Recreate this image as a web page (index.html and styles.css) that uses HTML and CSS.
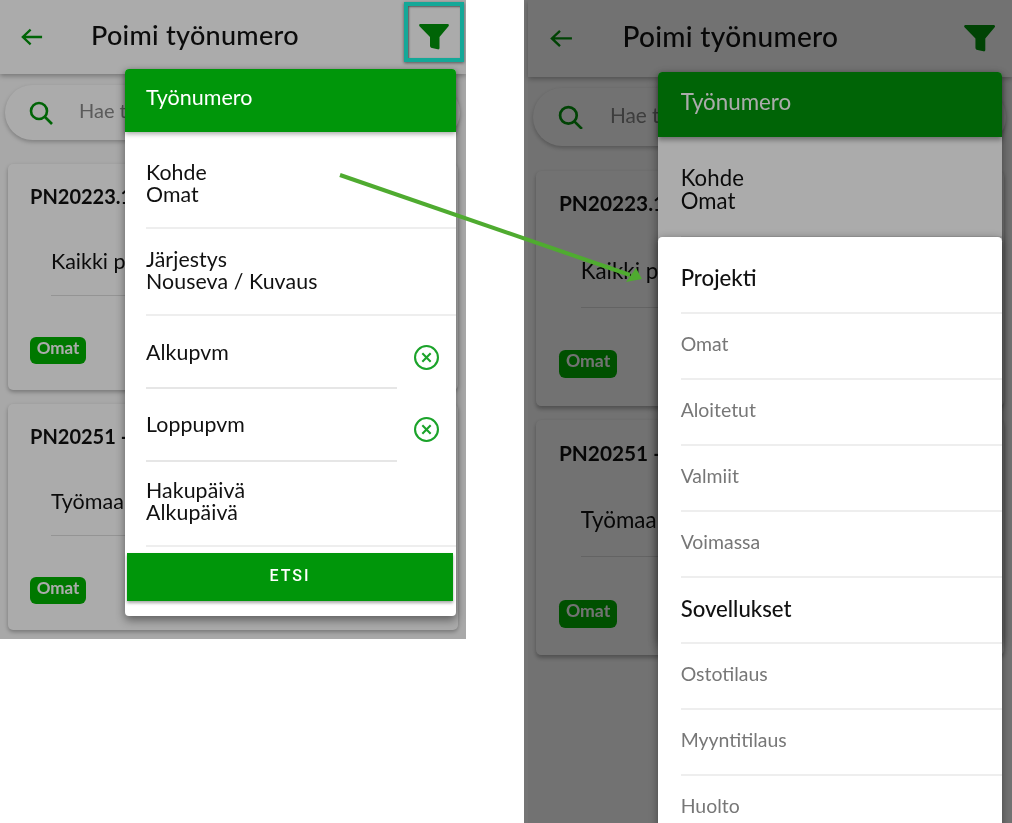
FILE: index.html
```html
<!DOCTYPE html>
<html lang="fi">
<head>
    <meta charset="UTF-8">
    <meta content="width=device-width, initial-scale=1.0" name="viewport">
    <title>Poimi työnumero</title>
    <link rel="stylesheet" href="styles.css">
</head>
<body>

<div class="shot shot-left">
    <div class="screen">
        <header class="appbar">
            <svg class="icon-back" viewBox="0 0 24 20"><path d="M23 10H2M10.500 2 2 10l8.500 8"/></svg>
            <h1 class="appbar-title">Poimi työnumero</h1>
            <svg class="icon-filter" viewBox="0 0 30 26"><path d="M1.500 0h27c1.200 0 1.800 1.200 1 2.200L20.500 13v11c0 1-.8 1.600-1.800 1.300l-5.700-1.300c-1.200-.3-2-1-2-2.200V13L.5 2.200C-.3 1.200.3 0 1.500 0z"/></svg>
        </header>
        <div class="search">
            <svg class="icon-search" viewBox="0 0 24 24"><circle cx="10" cy="10" r="8"/><path d="m16 16 7 7"/></svg>
            <span class="search-text">Hae t</span>
        </div>
        <div class="card">
            <div class="card-title">PN20223.1</div>
            <div class="card-sub">Kaikki p</div>
            <span class="badge">Omat</span>
        </div>
        <div class="card">
            <div class="card-title">PN20251 -</div>
            <div class="card-sub">Työmaa</div>
            <span class="badge">Omat</span>
        </div>
        <div class="scrim"></div>

        <div class="dialog">
            <div class="dialog-head">Työnumero</div>
            <div class="dialog-body">
                <div class="row">Kohde<br>Omat</div>
                <div class="row">Järjestys<br>Nouseva / Kuvaus</div>
                <div class="row-date">
                    <div class="row-date-text">Alkupvm</div>
                    <svg class="icon-clear" viewBox="0 0 24 24"><circle cx="12" cy="12" r="11"/><path d="m8 8 8 8m0-8-8 8"/></svg>
                </div>
                <div class="row-date">
                    <div class="row-date-text">Loppupvm</div>
                    <svg class="icon-clear" viewBox="0 0 24 24"><circle cx="12" cy="12" r="11"/><path d="m8 8 8 8m0-8-8 8"/></svg>
                </div>
                <div class="row">Hakupäivä<br>Alkupäivä</div>
                <button class="btn-search">ETSI</button>
            </div>
        </div>
        <div class="filter-mark"></div>
    </div>
</div>

<div class="shot shot-right">
    <div class="screen">
        <header class="appbar">
            <svg class="icon-back" viewBox="0 0 24 20"><path d="M23 10H2M10.500 2 2 10l8.500 8"/></svg>
            <h1 class="appbar-title">Poimi työnumero</h1>
            <svg class="icon-filter" viewBox="0 0 30 26"><path d="M1.500 0h27c1.200 0 1.800 1.200 1 2.200L20.500 13v11c0 1-.8 1.600-1.800 1.300l-5.700-1.300c-1.200-.3-2-1-2-2.200V13L.5 2.200C-.3 1.200.3 0 1.500 0z"/></svg>
        </header>
        <div class="search">
            <svg class="icon-search" viewBox="0 0 24 24"><circle cx="10" cy="10" r="8"/><path d="m16 16 7 7"/></svg>
            <span class="search-text">Hae t</span>
        </div>
        <div class="card">
            <div class="card-title">PN20223.1</div>
            <div class="card-sub">Kaikki p</div>
            <span class="badge">Omat</span>
        </div>
        <div class="card">
            <div class="card-title">PN20251 -</div>
            <div class="card-sub">Työmaa</div>
            <span class="badge">Omat</span>
        </div>
        <div class="scrim"></div>

        <div class="dialog">
            <div class="dialog-head">Työnumero</div>
            <div class="dialog-body">
                <div class="row">Kohde<br>Omat</div>
            </div>
        </div>
        <div class="scrim"></div>

        <div class="menu">
            <div class="menu-item menu-group">Projekti</div>
            <div class="menu-item">Omat</div>
            <div class="menu-item">Aloitetut</div>
            <div class="menu-item">Valmiit</div>
            <div class="menu-item">Voimassa</div>
            <div class="menu-item menu-group">Sovellukset</div>
            <div class="menu-item">Ostotilaus</div>
            <div class="menu-item">Myyntitilaus</div>
            <div class="menu-item">Huolto</div>
        </div>
    </div>
</div>

<svg class="pointer" viewBox="0 0 1012 823">
    <path class="pointer-line" d="M340 175 630 275"/>
    <path class="pointer-head" d="M642 279 626 282 636 268z"/>
</svg>

</body>
</html>
```

FILE: styles.css
```css
html, body {
    margin: 0;
    height: 100%;
}
body {
    position: relative;
    display: flex;
    align-items: flex-start;
    gap: 58px;
    overflow: hidden;
    background: #fff;
    font-family: Lato, "Open Sans", sans-serif;
    color: #111;
}

.shot {
    filter: blur(.4px);
    overflow: hidden;
}
.shot-left {
    width: 466px;
    height: 639px;
}
.shot-right {
    width: 470px;
    height: 792px;
    zoom: 1.04;
    padding-left: 4px;
    box-sizing: border-box;
    background: #757575;
}
.screen {
    position: relative;
    height: 100%;
    width: 466px;
    background: #fbfbfb;
}
.shot-right .screen {
    background: #fff;
}
.scrim {
    position: absolute;
    inset: 0;
    background: rgba(0, 0, 0, .33);
}

.appbar {
    height: 74px;
    display: flex;
    align-items: center;
    padding: 0 17px 0 21px;
    box-sizing: border-box;
    background: #fff;
    box-shadow: 0 2px 5px rgba(0, 0, 0, .3);
}
.appbar-title {
    flex: 1;
    margin: -5px 0 0 48px;
    font-size: 27px;
    font-weight: 500;
    letter-spacing: .28px;
}
.icon-back {
    width: 22px;
    height: 20px;
    fill: none;
    stroke: #00960a;
    stroke-width: 2.5;
}
.icon-filter {
    width: 30px;
    height: 26px;
    fill: #00960a;
}

.search {
    height: 55px;
    margin: 11px 6px 0 5px;
    padding-left: 24px;
    display: flex;
    align-items: center;
    border-radius: 28px;
    background: #fff;
    box-shadow: 0 2px 4px rgba(0, 0, 0, .25);
}
.icon-search {
    width: 24px;
    height: 24px;
    fill: none;
    stroke: #00960a;
    stroke-width: 2.6;
}
.search-text {
    margin: -5px 0 0 26px;
    font-size: 20px;
    color: #888;
    white-space: nowrap;
}

/* cards run on behind the dialog, only the part left of it is drawn */
.card {
    height: 226px;
    margin: 24px 8px 0;
    padding: 20px 22px 0;
    box-sizing: border-box;
    border-radius: 5px;
    background: #fff;
    box-shadow: 0 2px 4px rgba(0, 0, 0, .3);
}
.card + .card {
    margin-top: 14px;
}
.card-title {
    width: 95px;
    white-space: nowrap;
    font-size: 20px;
    font-weight: 700;
    line-height: 24px;
}
.card-sub {
    width: 74px;
    margin: 41px 0 41px 21px;
    padding-bottom: 22px;
    white-space: nowrap;
    border-bottom: 1px solid #ddd;
    font-size: 21.500px;
    line-height: 24px;
}
.badge {
    display: block;
    width: 56px;
    height: 27px;
    border-radius: 6px;
    background: #00b400;
    color: #fff;
    font-size: 17px;
    font-weight: 700;
    line-height: 22px;
    text-align: center;
}

.dialog {
    position: absolute;
    left: 125px;
    top: 69px;
    width: 331px;
    height: 547px;
    border-radius: 4px;
    background: #fff;
    box-shadow: 0 4px 10px rgba(0, 0, 0, .45);
}
.dialog-head {
    height: 63px;
    padding-left: 21px;
    border-radius: 4px 4px 0 0;
    background: #00960a;
    color: #fff;
    font-size: 21.500px;
    line-height: 57px;
    box-shadow: 0 2px 5px rgba(0, 0, 0, .35);
}
.dialog-body {
    padding-top: 10px;
    font-size: 21.300px;
    line-height: 22px;
    letter-spacing: .1px;
}
.row {
    margin-left: 21px;
    padding: 19px 0 22px;
    border-bottom: 2px solid #eee;
}
.shot-right .dialog-head {
    padding-left: 22px;
}
.shot-right .row {
    margin-left: 22px;
}
.row-date + .row {
    padding: 17px 0 22px;
}
.row-date {
    display: flex;
    margin-left: 21px;
}
.row-date-text {
    flex: 1;
    margin-right: 17px;
    height: 73px;
    padding-top: 25px;
    box-sizing: border-box;
    border-bottom: 2px solid #e6e6e6;
}
.row-date + .row-date .row-date-text {
    padding-top: 24px;
}
.icon-clear {
    flex: none;
    width: 25px;
    height: 25px;
    margin: 29px 17px 0 0;
    fill: none;
    stroke: #1ba32a;
    stroke-width: 2;
}
.row-date + .row-date .icon-clear {
    margin-top: 28px;
}
.btn-search {
    display: block;
    width: 326px;
    height: 48px;
    margin: 6px 0 0 2px;
    padding: 0 0 4px;
    border: 0;
    background: #00960a;
    color: #fff;
    font-family: Roboto, sans-serif;
    font-size: 16px;
    font-weight: 500;
    letter-spacing: 2px;
    box-shadow: 0 2px 3px rgba(0, 0, 0, .35);
}
.filter-mark {
    position: absolute;
    left: 404px;
    top: 2px;
    width: 60px;
    height: 60px;
    box-sizing: border-box;
    border: 4px solid #14a898;
    box-shadow: 0 1px 3px rgba(0, 0, 0, .5), inset 1px 1px 2px rgba(0, 0, 0, .5);
}

.menu {
    position: absolute;
    left: 125px;
    top: 228px;
    width: 331px;
    height: 600px;
    padding-left: 22px;
    box-sizing: border-box;
    border-radius: 4px;
    background: #fff;
    box-shadow: 0 2px 8px rgba(0, 0, 0, .4);
}
.menu-item {
    height: 63.500px;
    box-sizing: border-box;
    border-bottom: 2px solid #eee;
    color: #777;
    font-size: 18.700px;
    line-height: 58px;
}
.menu-group {
    color: #111;
    font-size: 21.300px;
    font-weight: 500;
    line-height: 60px;
}
.menu-item:first-child {
    height: 74px;
    padding-top: 10px;
    line-height: 58px;
}

.pointer {
    position: absolute;
    left: 0;
    top: 0;
    width: 1012px;
    height: 823px;
    pointer-events: none;
}
.pointer-line {
    fill: none;
    stroke: #4fab30;
    stroke-width: 4;
}
.pointer-head {
    fill: #4fab30;
}
```
